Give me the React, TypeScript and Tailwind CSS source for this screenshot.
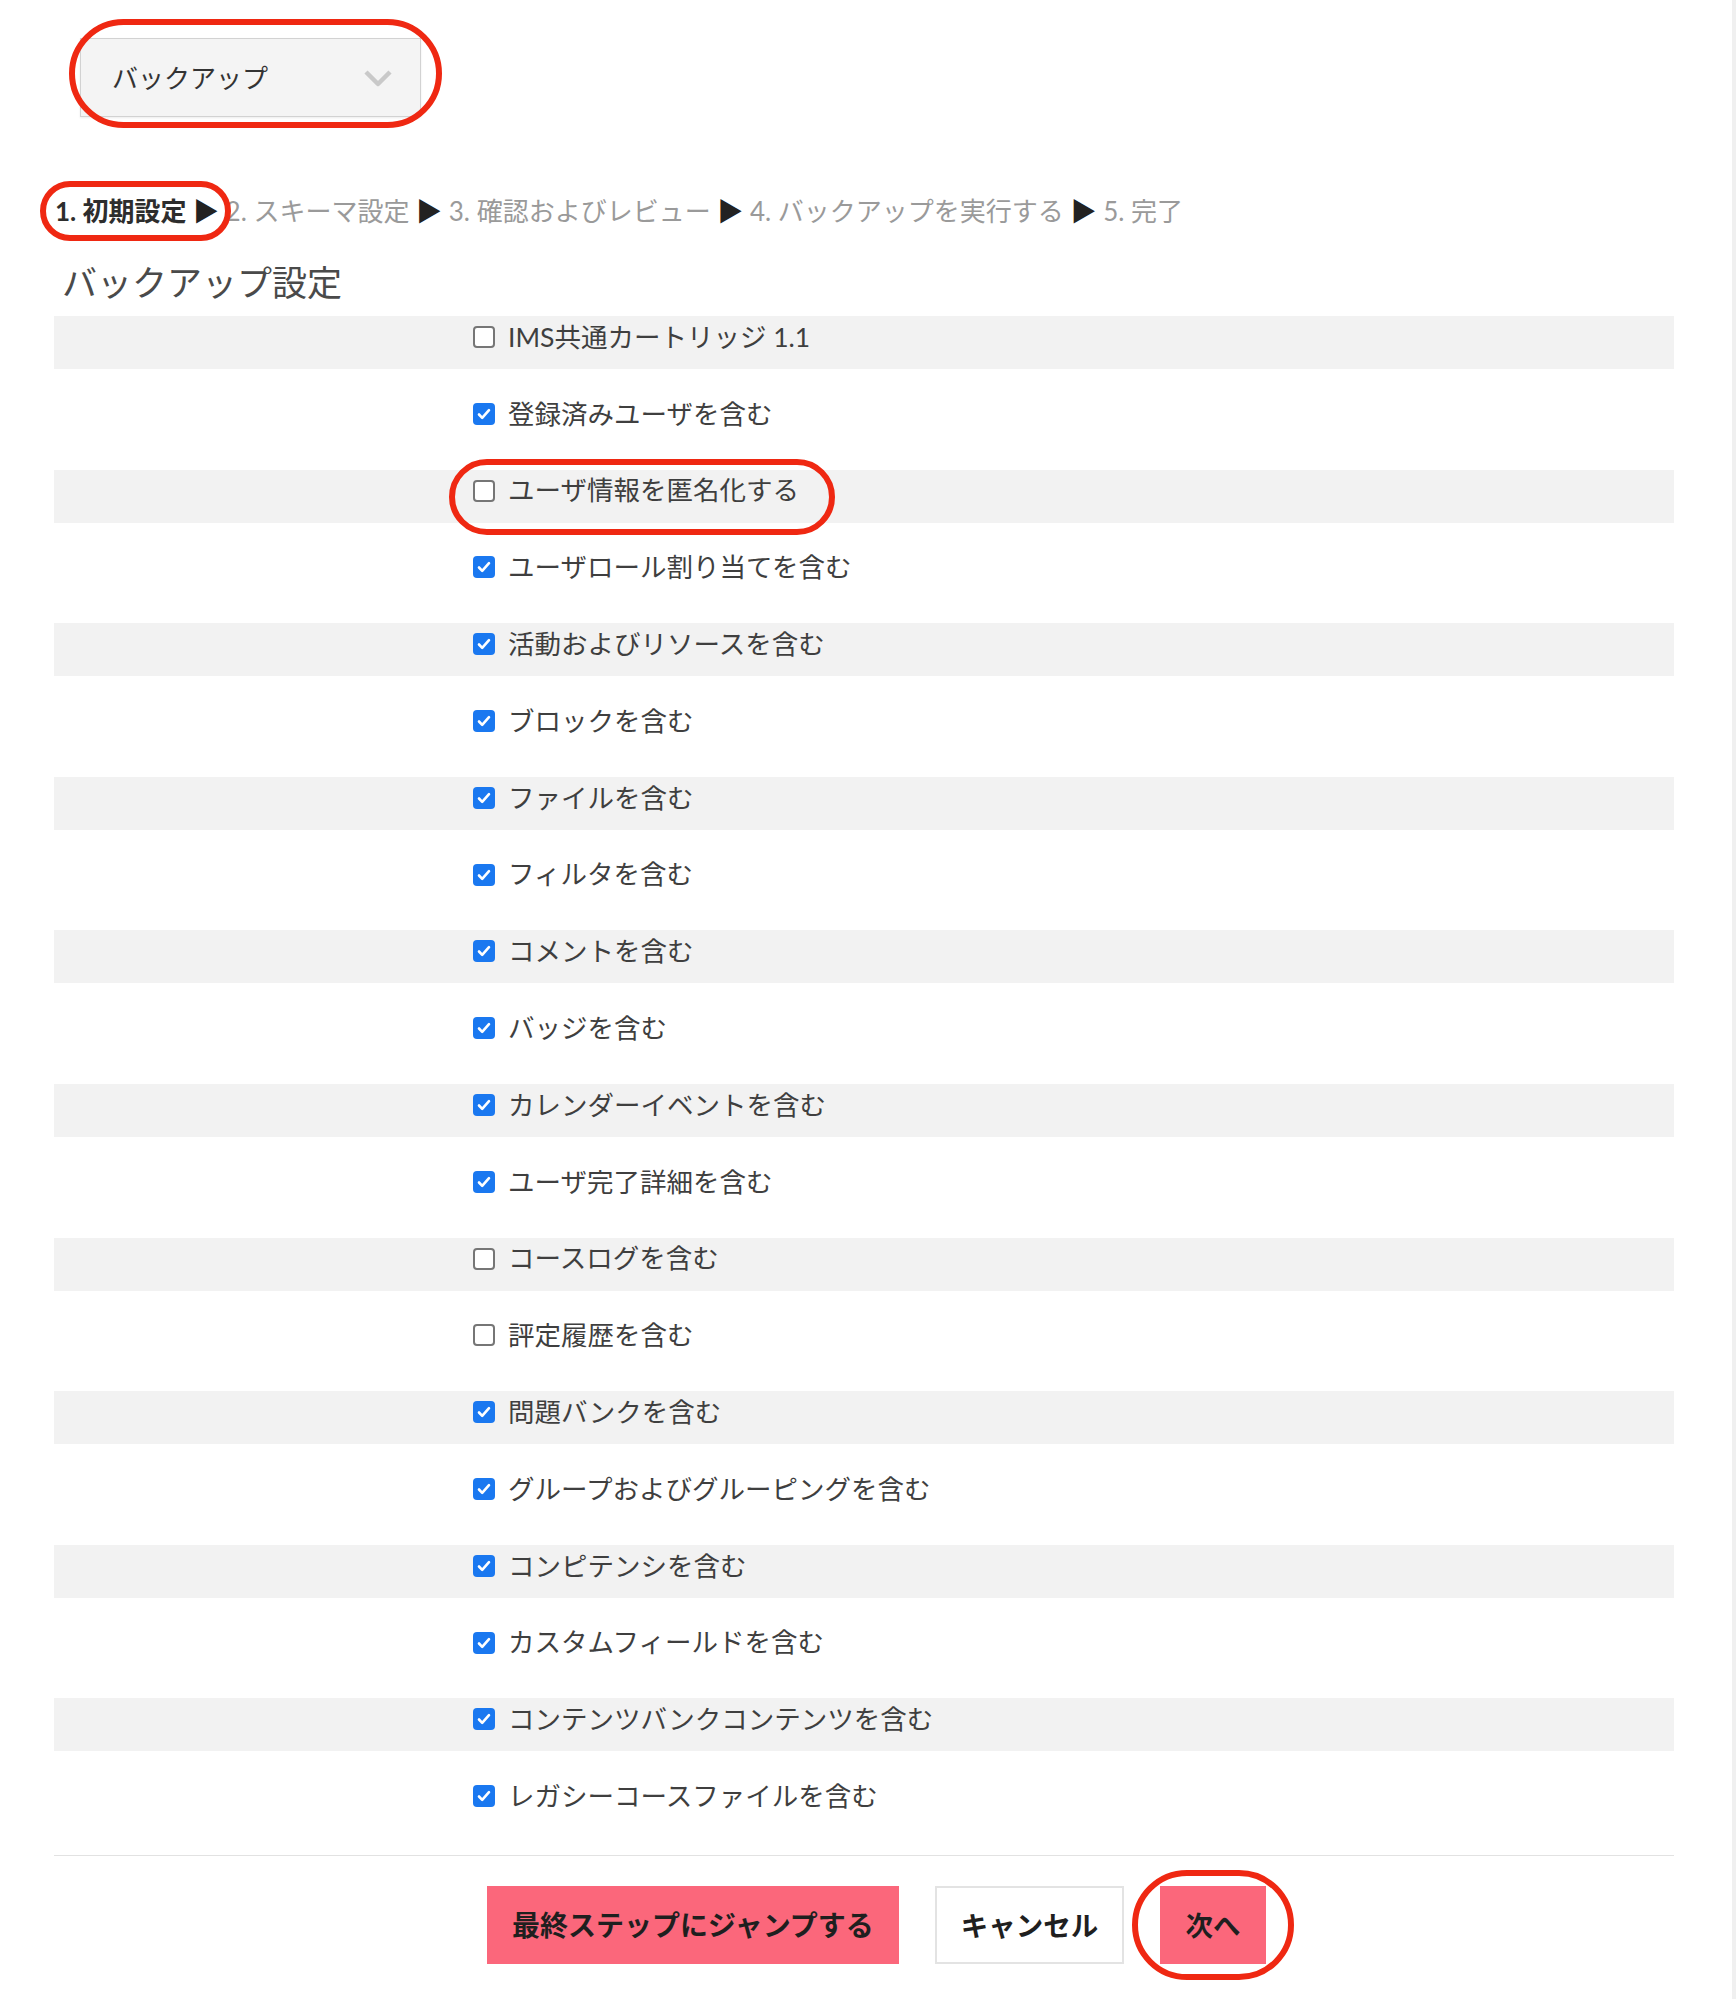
const FONT = "font-['Lato','Noto_Sans_CJK_JP',sans-serif]"

interface OptionRow {
  label: string
  checked: boolean
  marked?: boolean
}

const rows: OptionRow[] = [
  { label: 'IMS共通カートリッジ 1.1', checked: false },
  { label: '登録済みユーザを含む', checked: true },
  { label: 'ユーザ情報を匿名化する', checked: false, marked: true },
  { label: 'ユーザロール割り当てを含む', checked: true },
  { label: '活動およびリソースを含む', checked: true },
  { label: 'ブロックを含む', checked: true },
  { label: 'ファイルを含む', checked: true },
  { label: 'フィルタを含む', checked: true },
  { label: 'コメントを含む', checked: true },
  { label: 'バッジを含む', checked: true },
  { label: 'カレンダーイベントを含む', checked: true },
  { label: 'ユーザ完了詳細を含む', checked: true },
  { label: 'コースログを含む', checked: false },
  { label: '評定履歴を含む', checked: false },
  { label: '問題バンクを含む', checked: true },
  { label: 'グループおよびグルーピングを含む', checked: true },
  { label: 'コンピテンシを含む', checked: true },
  { label: 'カスタムフィールドを含む', checked: true },
  { label: 'コンテンツバンクコンテンツを含む', checked: true },
  { label: 'レガシーコースファイルを含む', checked: true },
]

function Checkbox({ checked }: { checked: boolean }) {
  if (checked) {
    return (
      <span className="flex h-[22px] w-[22px] shrink-0 items-center justify-center rounded-[4px] bg-[#1a78f0]">
        <svg width="16" height="16" viewBox="0 0 16 16" fill="none">
          <path d="M3 8.5l3.2 3.3L13 4.2" stroke="white" strokeWidth="2.6" strokeLinecap="round" strokeLinejoin="round" />
        </svg>
      </span>
    )
  }
  return <span className="h-[22px] w-[22px] shrink-0 rounded-[4px] border-2 border-[#767676] bg-white" />
}

function Ring({ className }: { className: string }) {
  return <span className={`pointer-events-none absolute rounded-full border-[6px] border-[#ef2812] ${className}`} />
}

const steps = ['2. スキーマ設定', '3. 確認およびレビュー', '4. バックアップを実行する', '5. 完了']

export default function App() {
  return (
    <div className={`flex min-h-screen w-full bg-white ${FONT}`}>
      <div className="flex-1 pl-[54px] pr-[58px] pb-[35px]">
        {/* action selector */}
        <div className="pl-[26px] pt-[38px]">
          <div className="relative flex h-[79px] w-[341px] items-center justify-between border border-[#d2d2d2] bg-[#f4f4f4] pl-[31px] pr-[27px] shadow-[0_1px_2px_rgba(0,0,0,0.08)]">
            <span className="text-[26px] leading-none text-[#333]">バックアップ</span>
            <svg width="30" height="20" viewBox="0 0 30 20" fill="none">
              <path d="M3 4l12 12L27 4" stroke="#c9c9c9" strokeWidth="4.5" strokeLinejoin="round" />
            </svg>
            <Ring className="-left-[12px] -top-[20px] h-[109px] w-[373px]" />
          </div>
        </div>

        {/* steps */}
        <div className="mt-[78px] flex items-center whitespace-pre pl-[1px] text-[26px] leading-[32px]">
          <span className="relative font-bold text-[#2d2d2d]">
            1. 初期設定 <span className="text-[#222]">▶</span>
            <Ring className="-left-[15px] -top-[14px] h-[60px] w-[191px]" />
          </span>
          {steps.map((s, i) => (
            <span key={s} className="text-[#9a9a9a]">
              {' '}
              {s}
              {i < steps.length - 1 && <span className="text-[#222]"> ▶</span>}
            </span>
          ))}
        </div>

        <h2 className="mt-[35px] pl-[8px] text-[35px] font-normal leading-[40px] text-[#4a4a4a]">バックアップ設定</h2>

        {/* options */}
        <div className="mt-[14px] flex flex-col gap-[23.8px]">
          {rows.map((r, i) => (
            <div key={r.label} className={`h-[53px] pl-[419px] ${i % 2 === 0 ? 'bg-[#f2f2f2]' : 'bg-white'}`}>
              <div className="flex h-[42px] items-center">
                <div className="relative flex items-center gap-[13px]">
                  <Checkbox checked={r.checked} />
                  <span className="text-[26.5px] leading-none text-[#3f3f3f]">{r.label}</span>
                  {r.marked && <Ring className="-left-[24px] -top-[18px] h-[76px] w-[386px]" />}
                </div>
              </div>
            </div>
          ))}
        </div>

        <div className="mt-[27px] border-t border-[#e2e2e2]" />

        {/* buttons */}
        <div className="mt-[30px] flex gap-[36px] pl-[433px]">
          <button className="flex h-[78px] w-[412px] items-center justify-center bg-[#fb677b] text-[28px] font-bold text-[#1f1f1f]">
            最終ステップにジャンプする
          </button>
          <button className="flex h-[78px] w-[189px] items-center justify-center border-2 border-[#e3e3e3] bg-white text-[27.5px] font-bold text-[#1f1f1f]">
            キャンセル
          </button>
          <button className="relative flex h-[78px] w-[106px] items-center justify-center bg-[#fb677b] text-[27.5px] font-bold text-[#1f1f1f]">
            次へ
            <Ring className="-left-[28px] -top-[16px] h-[110px] w-[162px]" />
          </button>
        </div>
      </div>
      <div className="w-[4px] shrink-0 bg-[#f0f0f0]" />
    </div>
  )
}
